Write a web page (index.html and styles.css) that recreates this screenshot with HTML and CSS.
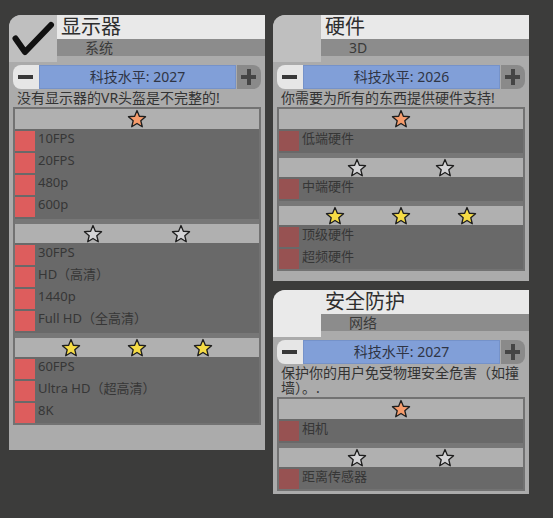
FILE: index.html
```html
<!DOCTYPE html>
<html lang="zh">
<head>
  <meta charset="UTF-8" />
  <title>VR 头盔组件</title>
  <link rel="stylesheet" href="styles.css">
</head>
<body>
  <svg class="defs" width="0" height="0">
    <symbol id="star" viewBox="0 0 20 20">
      <polygon points="10,1.5 12.35,7.26 18.56,7.72 13.8,11.74 15.29,17.78 10,14.5 4.71,17.78 6.2,11.74 1.44,7.72 7.65,7.26" />
    </symbol>
  </svg>

  <div class="screen">
    <section class="panel panel-display">
      <header class="panel-head">
        <div class="panel-icon">
          <svg width="48" height="47" viewBox="0 0 48 47">
            <path d="M6.5 23.5 L16 37 L42 10" fill="none" stroke="#111" stroke-width="6" stroke-linecap="round" stroke-linejoin="round" />
          </svg>
        </div>
        <div class="panel-titles">
          <div class="panel-title">显示器</div>
          <div class="panel-sub">系统</div>
        </div>
      </header>
      <div class="tech">
        <span class="tech-btn minus"></span>
        <span class="tech-level">科技水平: 2027</span>
        <span class="tech-btn plus"></span>
      </div>
      <p class="desc">没有显示器的VR头盔是不完整的!</p>
      <div class="tiers">
        <div class="tier-head"><div class="stars orange"><svg><use href="#star" /></svg></div></div>
        <div class="item"><span class="swatch"></span>10FPS</div>
        <div class="item"><span class="swatch"></span>20FPS</div>
        <div class="item"><span class="swatch"></span>480p</div>
        <div class="item"><span class="swatch"></span>600p</div>
        <div class="tier-head"><div class="stars silver"><svg><use href="#star" /></svg><svg><use href="#star" /></svg></div></div>
        <div class="item"><span class="swatch"></span>30FPS</div>
        <div class="item"><span class="swatch"></span>HD（高清）</div>
        <div class="item"><span class="swatch"></span>1440p</div>
        <div class="item"><span class="swatch"></span>Full HD（全高清）</div>
        <div class="tier-head"><div class="stars gold"><svg><use href="#star" /></svg><svg><use href="#star" /></svg><svg><use href="#star" /></svg></div></div>
        <div class="item"><span class="swatch"></span>60FPS</div>
        <div class="item"><span class="swatch"></span>Ultra HD（超高清）</div>
        <div class="item"><span class="swatch"></span>8K</div>
      </div>
    </section>

    <div class="column">
      <section class="panel panel-hardware">
        <header class="panel-head">
          <div class="panel-icon"></div>
          <div class="panel-titles">
            <div class="panel-title">硬件</div>
            <div class="panel-sub">3D</div>
          </div>
        </header>
        <div class="tech">
          <span class="tech-btn minus"></span>
          <span class="tech-level">科技水平: 2026</span>
          <span class="tech-btn plus"></span>
        </div>
        <p class="desc">你需要为所有的东西提供硬件支持!</p>
        <div class="tiers dim">
          <div class="tier-head"><div class="stars orange"><svg><use href="#star" /></svg></div></div>
          <div class="item"><span class="swatch"></span>低端硬件</div>
          <div class="tier-head"><div class="stars silver"><svg><use href="#star" /></svg><svg><use href="#star" /></svg></div></div>
          <div class="item"><span class="swatch"></span>中端硬件</div>
          <div class="tier-head"><div class="stars gold"><svg><use href="#star" /></svg><svg><use href="#star" /></svg><svg><use href="#star" /></svg></div></div>
          <div class="item"><span class="swatch"></span>顶级硬件</div>
          <div class="item"><span class="swatch"></span>超频硬件</div>
        </div>
      </section>

      <section class="panel panel-security">
        <header class="panel-head">
          <div class="panel-icon"></div>
          <div class="panel-titles">
            <div class="panel-title">安全防护</div>
            <div class="panel-sub">网络</div>
          </div>
        </header>
        <div class="tech">
          <span class="tech-btn minus"></span>
          <span class="tech-level">科技水平: 2027</span>
          <span class="tech-btn plus"></span>
        </div>
        <p class="desc">保护你的用户免受物理安全危害（如撞墙）。.</p>
        <div class="tiers dim">
          <div class="tier-head"><div class="stars orange"><svg><use href="#star" /></svg></div></div>
          <div class="item"><span class="swatch"></span>相机</div>
          <div class="tier-head"><div class="stars silver"><svg><use href="#star" /></svg><svg><use href="#star" /></svg></div></div>
          <div class="item"><span class="swatch"></span>距离传感器</div>
        </div>
      </section>
    </div>
  </div>
</body>
</html>
```

FILE: styles.css
```css
body {
  margin: 0;
  background-color: #3c3c3b;
  font-family: "Noto Sans", "Noto Sans CJK SC", sans-serif;
  color: #333;
}
.defs {
  position: absolute;
}
.screen {
  display: flex;
  align-items: flex-start;
  gap: 8px;
  padding: 15px 0 0 9px;
}
.column {
  display: flex;
  flex-direction: column;
  gap: 9px;
}
.panel {
  width: 256px;
  box-sizing: border-box;
  background-color: #ababab;
  border-top-left-radius: 12px;
}
.panel-display {
  height: 435px;
}
.panel-hardware {
  height: 266px;
}
.panel-security {
  height: 204px;
}
.panel-head {
  display: flex;
  height: 47px;
}
.panel-icon {
  width: 48px;
  height: 47px;
  background-color: #bfbfbf;
  border-top-left-radius: 12px;
}
.panel-icon svg {
  display: block;
}
.panel-security .panel-icon {
  background-color: #eaeaea;
}
.panel-titles {
  flex: 1;
}
.panel-title {
  height: 24px;
  padding-left: 4px;
  background-color: #e9e9e9;
  font-size: 20px;
  line-height: 24px;
  color: #2e2e2e;
}
.panel-sub {
  height: 17px;
  padding-left: 28px;
  background-color: #8c8c8c;
  font-size: 14px;
  line-height: 17px;
  color: #3a3a3a;
}
.tech {
  display: flex;
  height: 24px;
  margin: 3px 4px 0;
}
.tech-btn {
  position: relative;
  width: 26px;
}
.tech-btn.minus {
  background-color: #e6e6e6;
  border-radius: 8px 0 0 8px;
}
.tech-btn.plus {
  width: 24px;
  margin-left: 1px;
  background-color: #8a8a8a;
  border-radius: 0 8px 8px 0;
}
.tech-btn::before,
.tech-btn.plus::after {
  content: "";
  position: absolute;
  left: 5px;
  top: 10px;
  width: 15px;
  height: 4px;
  background-color: #383838;
}
.tech-btn.plus::before {
  left: 4px;
  background-color: #454545;
}
.tech-btn.plus::after {
  left: 10px;
  top: 4px;
  width: 4px;
  height: 16px;
  background-color: #454545;
}
.tech-level {
  flex: 1;
  box-sizing: border-box;
  border: 1px solid #7592c9;
  background-color: #819fd8;
  text-align: center;
  font-size: 14px;
  line-height: 22px;
  color: #2f3545;
}
.desc {
  margin: 0 4px;
  padding: 1px 0 2px 4px;
  font-size: 14px;
  line-height: 15px;
  color: #333;
}
.tiers {
  margin: 0 4px;
  border: 2px solid #727272;
  background-color: #696969;
}
.tier-head {
  margin-top: 2px;
  padding-top: 5px;
  background-color: #777;
}
.tier-head:first-child {
  margin-top: 0;
  padding-top: 0;
}
.stars {
  display: flex;
  justify-content: space-evenly;
  align-items: center;
  height: 19px;
  background-color: #b0b0b0;
}
.tier-head:first-child .stars {
  height: 20px;
}
.stars svg {
  width: 20px;
  height: 20px;
  stroke: #1e1e1e;
  stroke-width: 1.3;
  stroke-linejoin: round;
}
.stars.orange svg {
  fill: #f79c6c;
}
.stars.silver svg {
  fill: #d4d4d6;
}
.stars.gold svg {
  fill: #f6dc45;
}
.item {
  display: flex;
  align-items: flex-start;
  gap: 3px;
  height: 20px;
  margin-top: 2px;
  font-size: 13px;
  line-height: 15px;
  color: #363636;
}
.swatch {
  width: 20px;
  height: 20px;
  background-color: #dd5d5d;
}
.tiers.dim .swatch {
  background-color: #975252;
}
```
